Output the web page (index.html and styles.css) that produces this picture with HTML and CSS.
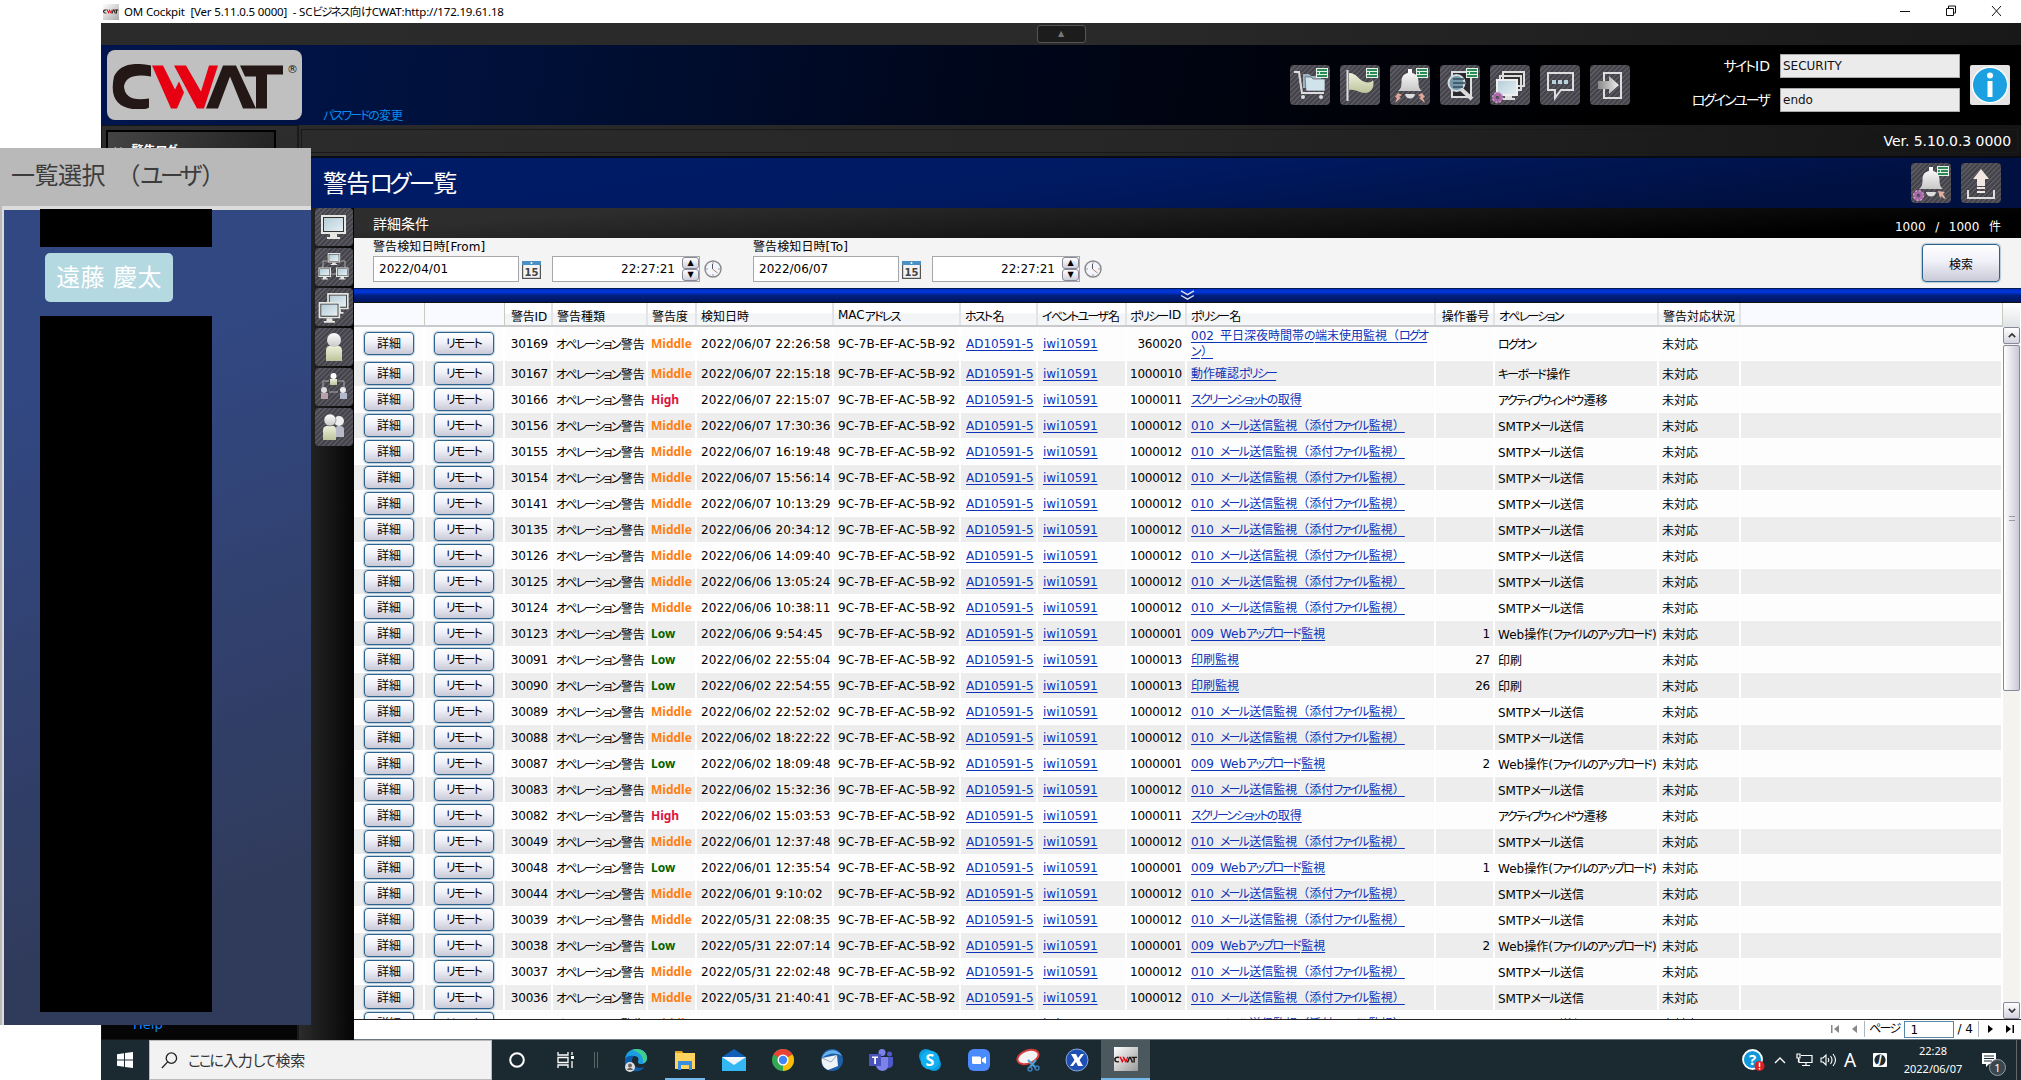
FILE: index.html
```html
<!DOCTYPE html>
<html lang="ja">
<head>
    <meta charset="UTF-8">
    <title>OM Cockpit</title>
    <link rel="stylesheet" href="styles.css">
</head>
<body>
    <svg class="defs" width="0" height="0">
        <defs>
            <linearGradient id="gMetal" x1="0" y1="0" x2="0" y2="1"><stop offset="0" stop-color="#fff"/><stop offset="1" stop-color="#c8c8c8"/></linearGradient>
            <linearGradient id="gScreen" x1="0" y1="0" x2="1" y2="1"><stop offset="0" stop-color="#b4ccd8"/><stop offset="1" stop-color="#e6f0f4"/></linearGradient>
            <linearGradient id="gGreen" x1="0" y1="0" x2="0" y2="1"><stop offset="0" stop-color="#eef0dc"/><stop offset="1" stop-color="#bcc49a"/></linearGradient>
            <linearGradient id="gArrow" x1="0" y1="0" x2="1" y2="0"><stop offset="0" stop-color="#888"/><stop offset="1" stop-color="#eee"/></linearGradient>
            <g id="sheet">
                <path fill="#e8f0e8" d="M26 3h12v10H26z"/>
                <path fill="#2a8a58" d="M27 4h10v2H27zM27 7h2v2h-2zM30 7h7v2h-7zM27 10h10v2H27z"/>
            </g>
            <g id="gear">
                <circle cx="7.500" cy="32.500" r="3.500" fill="none" stroke="#a868a8" stroke-width="3.500"/>
                <circle cx="7.500" cy="32.500" r="5" fill="none" stroke="#c89cc8" stroke-width="1.500" stroke-dasharray="2 1.900"/>
            </g>
            <g id="bell">
                <path fill="url(#gMetal)" d="M18 4h4v4c5 1 6.500 4 6.500 9 0 5 1 7 3.500 9H8c2.500-2 3.500-4 3.500-9 0-5 1.500-8 6.500-9z"/>
                <path fill="#ddd" d="M15 29h10c-1 6-9 6-10 0z"/>
            </g>
            <g id="monitor">
                <path fill="#e6e6e2" d="M6 7h25v19H6z"/>
                <path fill="#333" d="M8 9h21v15H8z"/>
                <path fill="url(#gScreen)" d="M9 10h19v13H9z"/>
                <path fill="#e6e6e2" d="M15 26h7v3h3v2H12v-2h3z"/>
            </g>
            <symbol id="i-cart" viewBox="0 0 40 40">
                <path fill="none" stroke="#ddd" stroke-width="2" d="M4 7h5l3 21h22"/>
                <path fill="none" stroke="#ccc" d="M9 11l2 13"/>
                <circle cx="13" cy="32" r="2" fill="#ddd"/><circle cx="31" cy="32" r="2" fill="#ddd"/>
                <path fill="#9db4c0" d="M13 9h6l2 2h10v12H13z"/>
                <path fill="#d0e2ea" stroke="#445" stroke-width=".600" d="M15 12h6l2 2h12v12H16z"/>
                <use href="#sheet"/>
            </symbol>
            <symbol id="i-flag" viewBox="0 0 40 40">
                <path stroke="#ddd" stroke-width="2" d="M7.500 5v31"/>
                <path fill="url(#gGreen)" d="M9 8c8 0 9 7 16 9 4 1 7 0 8-2 2 7-2 13-8 13-6 0-9-4-16-3z"/>
                <use href="#sheet"/>
            </symbol>
            <symbol id="i-bell" viewBox="0 0 40 40">
                <use href="#bell"/>
                <path fill="#e0a898" d="M8 28l4 2-3 2 2 1-6 5 2-5-2-1zM32 28l-4 2 3 2-2 1 6 5-2-5 2-1z"/>
                <use href="#sheet"/>
            </symbol>
            <symbol id="i-find" viewBox="0 0 40 40">
                <path fill="#2b2930" stroke="#ddd" stroke-width="2" d="M12 7h19v25H12z"/>
                <path stroke="#ddd" stroke-width="4" d="M21 24l11 10"/>
                <circle cx="16.500" cy="18" r="8" fill="#7898a8" stroke="#d4dadc" stroke-width="2"/>
                <path stroke="#31495a" stroke-width="1.500" d="M13 14h11M13 18h12M13 22h10"/>
                <use href="#sheet"/>
            </symbol>
            <symbol id="i-screens" viewBox="0 0 40 40">
                <path fill="#333" stroke="#ddd" stroke-width="2" d="M13 7h21v14H13zM10 11h21v14H10z"/>
                <path fill="url(#gScreen)" stroke="#eee" stroke-width="2" d="M7 15h20v15H7z"/>
                <path fill="#ddd" d="M15 31h7v2h3v2H13v-2h2z"/>
                <use href="#gear"/>
            </symbol>
            <symbol id="i-chat" viewBox="0 0 40 40">
                <path fill="none" stroke="#ddd" stroke-width="2" d="M8 8h25v17H21l-6 8v-8H8z"/>
                <path fill="#b8d0dc" d="M12 15h4v4h-4zM18 15h4v4h-4zM24 15h4v4h-4z"/>
            </symbol>
            <symbol id="i-exit" viewBox="0 0 40 40">
                <path fill="none" stroke="#ddd" stroke-width="2" d="M14 8h17v25H14z"/>
                <path fill="url(#gArrow)" d="M8 16h11v-5l10 9-10 9v-5H8z"/>
            </symbol>
            <symbol id="i-bellgear" viewBox="0 0 40 40">
                <use href="#bell"/>
                <path fill="#e0b0a0" d="M27 28l7 1-2 2 3 5-3-1-1-2-2 2z"/>
                <use href="#sheet"/><use href="#gear"/>
            </symbol>
            <symbol id="i-upload" viewBox="0 0 40 40">
                <path fill="#f2e6e0" d="M20 6l8 10h-4v7h-8v-7h-4zM16 24h8v2h-8zM16 28h8v2h-8z"/>
                <path fill="none" stroke="#ddd" stroke-width="2" d="M7 27v8h26v-8"/>
            </symbol>
            <symbol id="i-pc" viewBox="0 0 38 38"><use href="#monitor"/></symbol>
            <symbol id="i-pcs" viewBox="0 0 38 38">
                <path fill="none" stroke="#aaa" d="M12 13H8v7M26 13h4v7M16 26h6"/>
                <use href="#monitor" transform="translate(9.700 1.500) scale(.5)"/>
                <use href="#monitor" transform="translate(.5 16) scale(.5)"/>
                <use href="#monitor" transform="translate(18 16) scale(.5)"/>
            </symbol>
            <symbol id="i-pc2" viewBox="0 0 38 38">
                <use href="#monitor" transform="translate(7 -1) scale(.86)"/>
                <use href="#monitor" transform="translate(-1.500 8) scale(.86)"/>
            </symbol>
            <symbol id="i-user" viewBox="0 0 38 38">
                <path fill="url(#gGreen)" d="M11 33V23c0-4 2-5 4-5h8c2 0 4 1 4 5v10z"/>
                <circle cx="19" cy="12" r="7" fill="url(#gMetal)"/>
            </symbol>
            <symbol id="i-org" viewBox="0 0 38 38">
                <path fill="none" stroke="#aaa" d="M14 13H8v6M23 13h6v6M14 24h9"/>
                <path fill="url(#gGreen)" d="M15 11h7v6h-7z"/><path fill="#b8a0a8" d="M6 25h7v6H6z"/><path fill="#b4b8cc" d="M25 25h7v6h-7z"/>
                <circle cx="18.500" cy="8" r="3" fill="#fff"/><circle cx="9" cy="22" r="3" fill="#ddd"/><circle cx="28" cy="22" r="3" fill="#eee"/>
            </symbol>
            <symbol id="i-users" viewBox="0 0 38 38">
                <path fill="#b8bac8" d="M21 29V20c0-2 2-2 4-2s4 1 4 3v8z"/>
                <circle cx="24" cy="13" r="5" fill="#eee"/>
                <path fill="url(#gGreen)" d="M8 32V22c0-3 2-4 4-4h6c2 0 3 1 3 4v10z"/>
                <circle cx="15" cy="12" r="6" fill="url(#gMetal)" stroke="#555" stroke-width=".500"/>
            </symbol>
            <symbol id="i-cal" viewBox="0 0 19 19">
                <path fill="#f4f4f4" stroke="#555" stroke-width="1.200" d="M.6 1.600h17.800v16.800H.6z"/>
                <path fill="#4a90c4" d="M0 1h19v4H0z"/><circle cx="9.500" cy="3" r="1" fill="#fff"/>
                <text x="9.500" y="15.500" text-anchor="middle" class="cal-text">15</text>
            </symbol>
            <symbol id="i-clock" viewBox="0 0 18 18">
                <circle cx="9" cy="9" r="8" fill="#f2f6fa" stroke="#888" stroke-width="1.400"/>
                <path fill="none" stroke="#99a" d="M9 2v2M9 14v2M2 9h2M14 9h2"/>
                <path fill="none" stroke="#556" d="M8.500 4v5"/><path stroke="#c08060" d="M8.500 9l5 4"/>
            </symbol>
            <symbol id="i-cwat" viewBox="0 0 178 44">
                <path fill="#231815" d="M39 1Q10-5 2 12-5 44 26 45q8 0 11-2v-9Q13 38 12 22 14 8 39 12zM94 44L111 1h13l20 43h-13L118 12l-12 32zM128 1h43v9h-16v34h-11V12h-11z"/>
                <path fill="#e60012" d="M40 1h11l12 24 4-8 5 11-7 16h-6zM62 1h12l15 26L97 1h9L92 44h-7z"/>
            </symbol>
        </defs>
    </svg>

    <div class="window">
        <div class="titlebar">
            <span class="app-icon"><svg><use href="#i-cwat"/></svg></span>
            <span class="app-title">OM Cockpit&nbsp; [Ver 5.11.0.5 0000]&nbsp; - SC<span class="kana">ビジネス</span>向<span class="kana">け</span>CWAT:http://172.19.61.18</span>
            <svg class="win-controls" viewBox="0 0 110 22">
                <path fill="none" stroke="#111" d="M9 10.500h10M55.500 7.500h7v7h-7zM57.500 7v-2h7v7h-2M101 5l9 10M110 5l-9 10"/>
            </svg>
        </div>
        <div class="tabstrip"><span class="tab-up">▲</span></div>
        <div class="header">
            <div class="logo"><svg><use href="#i-cwat"/></svg><span class="reg">®</span></div>
            <a class="password"><span class="kana">パスワードの</span>変更</a>
            <div class="header-icons">
                <svg><use href="#i-cart"/></svg>
                <svg><use href="#i-flag"/></svg>
                <svg><use href="#i-bell"/></svg>
                <svg><use href="#i-find"/></svg>
                <svg><use href="#i-screens"/></svg>
                <svg><use href="#i-chat"/></svg>
                <svg><use href="#i-exit"/></svg>
            </div>
            <div class="login">
                <label><span class="kana">サイト</span>ID</label><div class="login-field">SECURITY</div>
                <label><span class="kana">ログインユーザ</span></label><div class="login-field">endo</div>
            </div>
            <svg class="info" viewBox="0 0 40 40">
                <rect width="40" height="40" rx="2" fill="#e4e4e4"/><circle cx="20" cy="20" r="18.500" fill="#fff"/>
                <circle cx="20" cy="20" r="17" fill="#1ba1e2"/><circle cx="20" cy="10.500" r="3" fill="#fff"/><path fill="#fff" d="M17.500 16h5v16h-5z"/>
            </svg>
        </div>

        <div class="main">
            <div class="sidebar">
                <div class="menu-head">✕&nbsp; 警告<span class="kana">ログ</span></div>
                <a class="help">Help</a>
            </div>
            <div class="content">
                <div class="version"><div class="version-box">Ver. 5.10.0.3 0000</div></div>
                <div class="page-head">
                    <h1>警告<span class="kana">ログ</span>一覧</h1>
                    <svg><use href="#i-bellgear"/></svg>
                    <svg><use href="#i-upload"/></svg>
                </div>
                <div class="work">
                    <div class="tools">
                        <svg><use href="#i-pc"/></svg>
                        <svg><use href="#i-pcs"/></svg>
                        <svg><use href="#i-pc2"/></svg>
                        <svg><use href="#i-user"/></svg>
                        <svg><use href="#i-org"/></svg>
                        <svg><use href="#i-users"/></svg>
                    </div>
                    <div class="panel">
                        <div class="cond-head"><span>詳細条件</span><span class="count">1000&nbsp; /&nbsp; 1000&nbsp; 件</span></div>
                        <div class="filters">
                            <div class="filter">
                                <div class="filter-label">警告検知日時[From]</div>
                                <div class="filter-row">
                                    <div class="date">2022/04/01</div><svg class="cal"><use href="#i-cal"/></svg>
                                    <div class="time">22:27:21<span class="spin"><i>▲</i><i>▼</i></span></div><svg class="clock"><use href="#i-clock"/></svg>
                                </div>
                            </div>
                            <div class="filter">
                                <div class="filter-label">警告検知日時[To]</div>
                                <div class="filter-row">
                                    <div class="date">2022/06/07</div><svg class="cal"><use href="#i-cal"/></svg>
                                    <div class="time">22:27:21<span class="spin"><i>▲</i><i>▼</i></span></div><svg class="clock"><use href="#i-clock"/></svg>
                                </div>
                            </div>
                            <button class="search-btn">検索</button>
                        </div>
                        <div class="splitter"><svg viewBox="0 0 16 12"><path fill="none" stroke="#dde" stroke-width="1.500" d="M1 1l7 4 7-4M1 6l7 4 7-4"/></svg></div>
                        <div class="grid-area">
                            <div class="grid">
                                <div class="row head">
                                    <div></div><div></div><div class="num">警告ID</div><div>警告種類</div><div>警告度</div><div>検知日時</div>
                                    <div>MAC<span class="kana">アドレス</span></div><div><span class="kana">ホスト</span>名</div><div><span class="kana">イベントユーザ</span>名</div>
                                    <div class="num"><span class="kana">ポリシー</span>ID</div><div><span class="kana">ポリシー</span>名</div><div class="num">操作番号</div>
                                    <div><span class="kana">オペレーション</span></div><div>警告対応状況</div><div></div>
                                </div>
                                <div id="rows"></div>
                            </div>
                            <div class="scroll">
                                <div class="scroll-corner"></div>
                                <div class="scroll-btn"><svg viewBox="0 0 10 6"><path fill="none" stroke="#333" stroke-width="2" d="M1 5l4-4 4 4"/></svg></div>
                                <div class="thumb"><span class="grip"></span></div>
                                <div class="scroll-btn last"><svg viewBox="0 0 10 6"><path fill="none" stroke="#333" stroke-width="2" d="M1 1l4 4 4-4"/></svg></div>
                            </div>
                        </div>
                        <div class="pager">
                            <svg class="nav off" viewBox="0 0 8 8"><path d="M0 0h1.500v8H0zM8 0v8L3 4z"/></svg>
                            <svg class="nav off" viewBox="0 0 8 8"><path d="M7 0v8L2 4z"/></svg>
                            <span class="page-label"><span class="kana">ページ</span></span>
                            <span class="page-input">1</span>
                            <span class="page-total">/ 4</span>
                            <svg class="nav" viewBox="0 0 8 8"><path d="M1 0v8l5-4z"/></svg>
                            <svg class="nav" viewBox="0 0 8 8"><path d="M0 0v8l5-4zM6.500 0H8v8H6.500z"/></svg>
                        </div>
                    </div>
                </div>
            </div>
        </div>

        <div class="taskbar">
            <div class="start"><svg viewBox="0 0 16 16"><path fill="#fff" d="M0 2.200l7-1v6.300H0zM8 1l8-1v7.500H8zM0 8.500h7v6.300l-7-1zM8 8.500h8V16l-8-1z"/></svg></div>
            <div class="task-search">
                <svg viewBox="0 0 18 18"><circle cx="11" cy="6.500" r="5.500" fill="none" stroke="#222" stroke-width="1.400"/><path stroke="#222" stroke-width="1.400" d="M7 10.500L1 17"/></svg>
                <span><span class="kana">ここに</span>入力<span class="kana">して</span>検索</span>
            </div>
            <div class="task"><svg viewBox="0 0 24 24"><circle cx="12" cy="12" r="6.800" fill="none" stroke="#fff" stroke-width="2"/></svg></div>
            <div class="task"><svg viewBox="0 0 24 24"><path fill="none" stroke="#fff" stroke-width="1.300" d="M4 4v3h10V4M4 20v-3h10v3M4 9.500h10v5H4zM18 4v3M18 13v7"/><path fill="#fff" d="M17 8h3v3h-3z"/></svg></div>
            <div class="task-sep"></div>
            <div class="task"><svg viewBox="0 0 24 24"><path fill="#1b9de2" d="M1 11C2 3 8 1 13 1c6 0 10 4 10 9 0 4-3 6-6 6s-3-2-3-3c1-1 1-5-4-5-4 0-7 1-9 3z"/><path fill="#3ecf8e" d="M8 2c8-3 15 2 15 8 0 3-2 5-4 5 1-7-4-11-11-13z"/><path fill="#0b5cad" d="M1 11c2-3 6-4 9-3-4 4-2 11 5 12 3 0 5-1 6-2-3 5-8 6-12 5C3 21 0 17 1 11z"/><circle cx="6" cy="19" r="5" fill="#ddd"/><circle cx="6" cy="17.500" r="2" fill="#666"/><path fill="#666" d="M3 22c1-3 5-3 6 0z"/></svg></div>
            <div class="task open"><svg viewBox="0 0 24 24"><path fill="#e6a31a" d="M2 3h7l2 3H2z"/><path fill="#ffd45e" d="M2 5h20v16H2z"/><path fill="#3a8ede" d="M5 13h14v9h-3v-5H8v5H5z"/></svg></div>
            <div class="task"><svg viewBox="0 0 24 24"><path fill="#0f5fb8" d="M0 9l12-8 12 8z"/><path fill="#35b7f3" d="M0 9h24v14H0z"/><path fill="#f2f6fa" d="M0 9h24l-12 8z"/></svg></div>
            <div class="task"><svg viewBox="0 0 24 24"><circle cx="12" cy="12" r="11" fill="#34a853"/><path fill="#ea4335" d="M2.500 6.500a11 11 0 0119 0L12 12z"/><path fill="#fbbc05" d="M21.500 6.500A11 11 0 0112 23V12z"/><circle cx="12" cy="12" r="5.500" fill="#fff"/><circle cx="12" cy="12" r="4.200" fill="#4285f4"/></svg></div>
            <div class="task"><svg viewBox="0 0 24 24"><circle cx="12" cy="12" r="11" fill="#1f5faa"/><path fill="#69b4ee" d="M2 10C4 1 17-1 22 8c-6-4-14-3-20 2z"/><path fill="#eef3f8" d="M2 10l15-3 1 11-10 4c-5-2-7-7-6-12z"/><path fill="none" stroke="#9ab" d="M2 10l9 4 6-7"/></svg></div>
            <div class="task"><svg viewBox="0 0 24 24"><circle cx="13" cy="4.500" r="3.500" fill="#7b83eb"/><circle cx="20.500" cy="6" r="2.500" fill="#5059c9"/><path fill="#5059c9" d="M16 9h8v7c0 4-5 5-8 3z"/><path fill="#7b83eb" d="M7 9h12v9c0 6-10 7-12 0z"/><path fill="#4b53bc" d="M0 6h12v12H0z"/><path fill="#fff" d="M3 8.500h6V10H7v6H5.200v-6H3z"/></svg></div>
            <div class="task"><svg viewBox="0 0 24 24"><circle cx="8" cy="8" r="7" fill="#0a9be0"/><circle cx="16" cy="16" r="7" fill="#0a9be0"/><circle cx="12" cy="12" r="9.500" fill="#12b0f2"/><text x="12" y="17.500" text-anchor="middle" class="skype">S</text></svg></div>
            <div class="task"><svg viewBox="0 0 24 24"><rect x="1" y="1" width="22" height="22" rx="6" fill="#4a8cff"/><path fill="#fff" d="M5 8.500h7.500q1.500 0 1.500 1.500v6H6.500Q5 16 5 14.500zM15 11l4-2.500v7.500l-4-2.500z"/></svg></div>
            <div class="task"><svg viewBox="0 0 24 24"><ellipse cx="12" cy="9" rx="11" ry="6.500" transform="rotate(-20 12 9)" fill="#f4f4f4" stroke="#d63a3a" stroke-width="2"/><path fill="none" stroke="#4aa3d8" stroke-width="2" d="M12 12l8 8M20 12l-7 8"/><circle cx="14" cy="21" r="2" fill="none" stroke="#3a7fb8" stroke-width="1.500"/><circle cx="21" cy="20" r="2" fill="none" stroke="#3a7fb8" stroke-width="1.500"/></svg></div>
            <div class="task"><svg viewBox="0 0 24 24"><circle cx="12" cy="12" r="11" fill="#1d4fb4" stroke="#89a8dc"/><path fill="#fff" d="M6 6h5l2 4 3-4h3l-4.500 6 3.500 6h-5l-2-4-3 4H5l4.500-6z"/></svg></div>
            <div class="task active"><div class="cwat-tile"><svg><use href="#i-cwat"/></svg></div></div>
            <div class="tray">
                <svg class="tray-help" viewBox="0 0 23 23"><circle cx="10.500" cy="10.500" r="9.500" fill="#1098d8" stroke="#fff" stroke-width="1.800"/><text x="10.500" y="16" text-anchor="middle" class="q">?</text><circle cx="17.500" cy="17" r="5" fill="#e02020"/><path stroke="#fff" stroke-width="1.500" d="M17.500 13.500v4.500M17.500 19v1.500"/></svg>
                <svg class="tray-up" viewBox="0 0 12 8"><path fill="none" stroke="#fff" stroke-width="1.300" d="M1 7l5-5 5 5"/></svg>
                <svg class="tray-net" viewBox="0 0 17 14"><path fill="none" stroke="#fff" stroke-width="1.200" d="M5 2.500h11v7H3V6M10 9.500v3M6 12.500h8M1 1h3v4H1zM2.500 5v4"/></svg>
                <svg class="tray-vol" viewBox="0 0 17 14"><path fill="none" stroke="#fff" stroke-width="1.100" d="M1 5h2l3-3v10L3 9H1zM8 5q1.500 2 0 4M10.500 3q3 4 0 8M13 1q5 6 0 12"/></svg>
                <span class="ime">A</span>
                <span class="tray-j">J</span>
                <div class="datetime">22:28<br>2022/06/07</div>
                <div class="notice"><svg viewBox="0 0 16 16"><path fill="#fff" d="M0 1h14v11H7l-3 3v-3H0z"/><path stroke="#1b2a30" d="M2 4h10M2 6.500h10M2 9h8"/></svg><span class="badge">1</span></div>
            </div>
        </div>
    </div>

    <div class="overlay">
        <div class="overlay-title">一覧選択　（<span class="kana">ユーザ</span>）</div>
        <div class="overlay-body">
            <div class="mask mask-top"></div>
            <div class="selected-user">遠藤 慶太</div>
            <div class="mask mask-list"></div>
        </div>
    </div>

    <script src="rows.js"></script>
</body>
</html>
```
FILE: styles.css
```css
* {
    box-sizing: border-box;
}

body {
    margin: 0;
    width: 2021px;
    height: 1080px;
    overflow: hidden;
    position: relative;
    background: #fff;
    font-family: "DejaVu Sans", "Noto Sans CJK JP", sans-serif;
    font-size: 12px;
    color: #000;
}

svg {
    display: block;
    flex: none;
}

.defs {
    position: absolute;
}

.kana {
    margin-right: 0.1em;
    font-feature-settings: "palt";
    letter-spacing: -0.15em;
}

.window {
    margin-left: 101px;
    height: 1080px;
    display: flex;
    flex-direction: column;
}

/* title bar */
.titlebar {
    height: 23px;
    flex: none;
    display: flex;
    align-items: center;
    padding-left: 2px;
    background: #fff;
}

.app-icon {
    width: 16px;
    height: 16px;
    display: flex;
    align-items: center;
    background: linear-gradient(135deg, #fff, #aaa);
}

.app-icon svg {
    width: 16px;
    height: 5px;
}

.app-title {
    margin-left: 5px;
    padding-bottom: 1px;
    font-family: "Noto Sans", "Noto Sans CJK JP", sans-serif;
    font-size: 11.5px;
    letter-spacing: -0.17px;
    white-space: nowrap;
}

.win-controls {
    width: 110px;
    height: 22px;
    margin-left: auto;
    margin-right: 20px;
}

.tabstrip {
    height: 22px;
    flex: none;
    display: flex;
    justify-content: center;
    padding-top: 2px;
    background: linear-gradient(90deg, #2b2b2b, #2a2a2a 50%, #181818);
}

.tab-up {
    width: 49px;
    height: 18px;
    border: 1px solid #555;
    border-radius: 3px;
    background: #1c1c1c;
    color: #777;
    font-size: 8px;
    line-height: 16px;
    text-align: center;
}

/* header */
.header {
    height: 80px;
    flex: none;
    display: flex;
    align-items: center;
    padding-left: 6px;
    padding-right: 11px;
    background: linear-gradient(100deg, #00154f 0%, #001038 22%, #00071c 45%, #000209 65%, #000 80%);
}

.logo {
    width: 195px;
    height: 70px;
    display: flex;
    align-items: flex-start;
    padding: 14px 5px;
    border-radius: 8px;
    background: #c0c0c0;
}

.logo svg {
    width: 178px;
    height: 45px;
}

.reg {
    width: 10px;
    margin-left: -3px;
    color: #231815;
    font-size: 11px;
    line-height: 12px;
}

.password {
    margin: 66px auto 0 21px;
    height: 24px;
    color: #0a8cf0;
}

.header-icons {
    display: flex;
    gap: 10px;
}

.header-icons svg,
.page-head svg {
    width: 40px;
    height: 40px;
}

.header-icons svg,
.page-head svg,
.tools svg {
    border-radius: 4px;
    background: repeating-linear-gradient(135deg, #5a5860 0, #5a5860 1.5px, #46444b 1.5px, #46444b 3.5px);
}

.login {
    width: 276px;
    margin: 0 10px 4px 54px;
    display: grid;
    grid-template-columns: 1fr 180px;
    gap: 10px;
    align-items: center;
    color: #fff;
    text-align: right;
    font-size: 14px;
}

.login label {
    padding-bottom: 3px;
}

.login-field {
    height: 24px;
    padding-left: 2px;
    border: 1px solid #aaa;
    background: #ebebeb;
    color: #111;
    font-size: 12px;
    line-height: 23px;
    text-align: left;
}

.info {
    width: 40px;
    height: 40px;
}

/* main */
.main {
    flex: 1;
    min-height: 0;
    display: flex;
    background: linear-gradient(90deg, #2b2b2b, #111);
}

.sidebar {
    width: 198px;
    flex: none;
    display: flex;
    flex-direction: column;
    justify-content: space-between;
    border: 1px solid #151515;
    border-right: 2px solid #1a1a1a;
    background: linear-gradient(#2d2d2d, #050505);
}

.menu-head {
    width: 170px;
    height: 34px;
    margin: 4px 0 0 4px;
    padding: 11px 0 0 5px;
    border: 2px solid #000;
    background: linear-gradient(110deg, #444, #222);
    color: #fff;
    font-weight: bold;
    line-height: 16px;
}

.help {
    height: 22px;
    margin-left: 31px;
    color: #0a84ff;
    font-size: 13px;
}

.content {
    flex: 1;
    min-width: 0;
    display: flex;
    flex-direction: column;
}

.version {
    height: 33px;
    flex: none;
    padding: 4px 3px 5px 2px;
    background: linear-gradient(90deg, #2b2b2b, #262626 50%, #141414);
    border-bottom: 2px solid #080a14;
}

.version-box {
    height: 24px;
    border: 1px solid #191919;
    padding-right: 6px;
    color: #fff;
    font-size: 14px;
    letter-spacing: -0.05px;
    line-height: 23px;
    text-align: right;
}

.page-head {
    height: 50px;
    flex: none;
    display: flex;
    align-items: center;
    gap: 10px;
    padding: 0 20px 0 24px;
    background: linear-gradient(172deg, #001c68 0%, #001a62 45%, #001040 85%);
}

.page-head h1 {
    margin: -3px auto 0 0;
    color: #fff;
    font-size: 24px;
    font-weight: 400;
    letter-spacing: -0.7px;
}

.work {
    flex: 1;
    min-height: 0;
    display: flex;
}

.tools {
    width: 55px;
    flex: none;
    display: flex;
    flex-direction: column;
    align-items: flex-end;
    gap: 2px;
    padding-right: 1px;
    background: linear-gradient(90deg, #2b2b2b, #050505);
}

.tools svg {
    width: 38px;
    height: 38px;
}

.panel {
    flex: 1;
    min-width: 0;
    display: flex;
    flex-direction: column;
    background: #fff;
}

.cond-head {
    height: 30px;
    flex: none;
    display: flex;
    align-items: center;
    justify-content: space-between;
    padding: 0 20px 0 19px;
    background: linear-gradient(176deg, #2d2d2d 15%, #000 85%);
    color: #fff;
    font-size: 14px;
}

.count {
    padding-top: 5px;
    font-size: 12px;
    word-spacing: 1px;
}

.filters {
    height: 50px;
    flex: none;
    display: flex;
    padding: 0 21px 0 19px;
    background: #f4f4f4;
}

.filter {
    width: 380px;
}

.filter-label {
    height: 18px;
    padding-top: 1px;
    letter-spacing: 0.1px;
    line-height: 17px;
}

.filter-row {
    display: flex;
    align-items: center;
}

.date,
.time {
    height: 26px;
    border: 1px solid #a5a7ab;
    background: #fff;
    line-height: 25px;
}

.date {
    width: 146px;
    padding-left: 5px;
}

.cal {
    width: 19px;
    height: 19px;
    margin: 0 11px 0 3px;
}

.cal-text {
    font: bold 10px "DejaVu Sans", sans-serif;
    fill: #444;
}

.time {
    width: 148px;
    display: flex;
    justify-content: flex-end;
}

.spin {
    width: 17px;
    display: flex;
    flex-direction: column;
    margin-left: 7px;
}

.spin i {
    height: 12px;
    border: 1px solid #889;
    border-radius: 3px;
    background: linear-gradient(#fff, #cfd0dc);
    font-size: 8px;
    font-style: normal;
    line-height: 10px;
    text-align: center;
}

.clock {
    width: 18px;
    height: 18px;
    margin-left: 4px;
}

.search-btn {
    width: 78px;
    height: 38px;
    margin: 6px 0 0 auto;
    font-size: 12px;
}

.search-btn,
.btn {
    padding: 0;
    border: 1px solid #2c628b;
    border-radius: 4px;
    background: linear-gradient(#fff, #f0f0f8 45%, #cacad8);
    color: #000;
    font-family: inherit;
    box-shadow: 0 0 1px 1px rgba(90, 140, 180, 0.4);
}

.splitter {
    height: 15px;
    flex: none;
    display: flex;
    align-items: center;
    justify-content: center;
    border-top: 1px solid #001a50;
    border-bottom: 1px solid #111;
    background: linear-gradient(#0030c8, #0036d8 25%, #001f80 50%, #001660);
}

.splitter svg {
    width: 15px;
    height: 11px;
}

/* grid */
.grid-area {
    flex: 1;
    min-height: 0;
    display: flex;
    border-bottom: 1px solid #222;
    overflow: hidden;
}

.grid {
    flex: 1;
    min-width: 0;
}

.row {
    display: grid;
    grid-template-columns: 71px 80px 48px 95px 49px 137px 127px 77px 89px 60px 249px 59px 164px 82px 1fr;
    height: 26px;
    background: #fdfdfd;
    border-bottom: 1px solid #fff;
}

.row.tall {
    height: 34px;
}

.row.alt {
    background: #ededed;
}

.row > div {
    display: flex;
    align-items: center;
    padding: 0 3px;
    border-right: 2px solid #fff;
    white-space: nowrap;
}

.row > .num {
    justify-content: flex-end;
    letter-spacing: -0.2px;
}

.row > .code {
    padding-left: 4px;
    letter-spacing: 0.14px;
}

.row > .link {
    padding: 1px 0 0 5px;
}

.row > .policy {
    padding-left: 4px;
}

.row.head {
    height: 24px;
    border-bottom: 2px solid #c8cacc;
    background: linear-gradient(#fff 45%, #f2f3f5 50%, #f6f7f8);
}

.row.head > div {
    border-right: 2px solid #e2e4e6;
    padding: 2px 4px 0;
}

.row.head > div.num {
    padding-right: 4px;
}

.row.head > div:nth-child(-n+2),
.row.head > div:last-child {
    border-right: 1px solid #c9cbbc;
    background: #f9faff;
}

.row > .cell-btn:first-child {
    padding-left: 10px;
}

.row > .cell-btn {
    padding-left: 9px;
}

.btn {
    width: 50px;
    height: 23px;
    font-size: 12px;
    line-height: 20px;
}

.btn.wide {
    width: 60px;
}

.level {
    font-family: "Noto Sans", sans-serif;
    font-weight: bold;
}

.Middle {
    color: #ff7f11;
}

.High {
    color: #dc143c;
}

.Low {
    color: #006400;
}

.row a {
    color: #0d34b8;
    text-decoration: underline;
    text-underline-offset: 2px;
    line-height: 15px;
}

.row.tall a {
    white-space: normal;
    line-height: 16px;
}

.scroll {
    width: 17px;
    margin-right: 1px;
    flex: none;
    display: flex;
    flex-direction: column;
    background: #f4f3f0;
}

.scroll-corner {
    height: 24px;
    flex: none;
    background: linear-gradient(#fff, #dfe3e6);
}

.scroll-btn {
    height: 17px;
    flex: none;
    display: flex;
    align-items: center;
    justify-content: center;
    border: 1px solid #889;
    border-radius: 2px;
    background: linear-gradient(#fff, #d4d4e0);
}

.scroll-btn svg {
    width: 8px;
    height: 5px;
}

.scroll-btn.last {
    margin-top: auto;
}

.thumb {
    height: 346px;
    margin-top: 1px;
    display: flex;
    align-items: center;
    justify-content: center;
    border: 1px solid #889;
    border-radius: 2px;
    background: linear-gradient(90deg, #fff, #c8c8d8);
}

.grip {
    width: 6px;
    height: 5px;
    border-top: 1px solid #99a;
    border-bottom: 1px solid #99a;
}

.pager {
    height: 20px;
    flex: none;
    display: flex;
    align-items: center;
    justify-content: flex-end;
    padding: 0 7px 1px 0;
    border-bottom: 1px solid #6a7680;
}

.nav {
    width: 8px;
    height: 8px;
    margin: 0 0 0 11px;
}

.nav.off {
    fill: #888;
}

.page-label {
    margin-left: 6px;
    padding: 0 3px 0 4px;
    border-left: 1px solid #a9b8c4;
    line-height: 16px;
}

.page-input {
    width: 50px;
    height: 17px;
    padding-left: 6px;
    border: 1px solid #5a87a8;
    line-height: 16px;
}

.page-total {
    margin-right: -3px;
    padding: 0 5px 0 4px;
    border-right: 1px solid #a9b8c4;
    line-height: 16px;
}

/* taskbar */
.taskbar {
    height: 40px;
    flex: none;
    display: flex;
    align-items: stretch;
    background: #1b2a30;
}

.start {
    width: 48px;
    display: flex;
    align-items: center;
    justify-content: center;
}

.start svg {
    width: 16px;
    height: 16px;
}

.task-search {
    width: 343px;
    display: flex;
    align-items: center;
    gap: 10px;
    padding-left: 11px;
    border: 1px solid #bbb;
    background: #f2f2f2;
    color: #333;
    font-size: 15px;
    font-family: "Noto Sans CJK JP", sans-serif;
}

.task-search svg {
    width: 17px;
    height: 17px;
}

.task-search > span {
    padding-bottom: 2px;
    letter-spacing: -0.3px;
}

.task {
    width: 49px;
    display: flex;
    align-items: center;
    justify-content: center;
}

.task svg {
    width: 24px;
    height: 24px;
}

.task-sep {
    width: 4px;
    height: 16px;
    margin: 12px 13px 0 4px;
    border-left: 1px solid #566;
    border-right: 1px solid #566;
}

.task.open {
    background: linear-gradient(#76b9ed, #76b9ed) center bottom / 40px 2px no-repeat;
}

.task.active {
    background: #4b585d;
    border-bottom: 2px solid #76b9ed;
}

.cwat-tile {
    width: 24px;
    height: 24px;
    display: flex;
    align-items: center;
    background: linear-gradient(135deg, #fff, #999);
}

.cwat-tile svg {
    width: 24px;
    height: 7px;
}

.skype {
    font: bold 16px "Noto Sans", sans-serif;
    fill: #fff;
}

.q {
    font: bold 15px "Noto Sans", sans-serif;
    fill: #fff;
}

.tray {
    margin-left: auto;
    margin-right: 4px;
    padding-right: 10px;
    display: flex;
    align-items: center;
    border-right: 1px solid #666;
    color: #fff;
}

.tray-help {
    width: 23px;
    height: 23px;
}

.tray-up {
    width: 12px;
    height: 8px;
    margin-left: 9px;
}

.tray-net {
    width: 17px;
    height: 14px;
    margin-left: 10px;
}

.tray-vol {
    width: 17px;
    height: 14px;
    margin-left: 7px;
}

.ime {
    width: 14px;
    margin-left: 7px;
    font: 19px "Noto Sans", sans-serif;
}

.tray-j {
    width: 14px;
    height: 14px;
    margin-left: 15px;
    border-radius: 1px;
    background: radial-gradient(circle, #1b2a30 5px, #fff 6px);
    font: bold italic 10px/13px "Noto Sans", sans-serif;
    text-align: center;
}

.datetime {
    width: 62px;
    margin-left: 15px;
    font: 11px/18px "Noto Sans", sans-serif;
    text-align: center;
}

.notice {
    width: 24px;
    margin-left: 18px;
    position: relative;
}

.notice svg {
    width: 16px;
    height: 16px;
}

.badge {
    position: absolute;
    left: 7px;
    top: 7px;
    width: 17px;
    height: 17px;
    border: 1px solid #99a;
    border-radius: 50%;
    background: #3a474d;
    font: 11px/15px "Noto Sans", sans-serif;
    text-align: center;
}

/* user list window lying over the main one */
.overlay {
    position: absolute;
    left: 0;
    top: 148px;
    width: 311px;
    height: 877px;
    display: flex;
    flex-direction: column;
    background: #b9b9b9;
}

.overlay-title {
    height: 58px;
    padding-left: 11px;
    color: #3c3c3c;
    font-size: 24px;
    font-weight: 400;
    letter-spacing: -0.5px;
    line-height: 57px;
    white-space: nowrap;
}

.overlay-body {
    flex: 1;
    margin-left: 2px;
    padding: 0 0 13px 36px;
    display: flex;
    flex-direction: column;
    align-items: flex-start;
    border-top: 4px solid #dcdcdc;
    border-left: 2px solid #dcdcdc;
    background: linear-gradient(160deg, #324883 20%, #303a5a 85%);
}

.mask {
    width: 172px;
    background: #000;
}

.mask-top {
    height: 38px;
    margin-top: -1px;
}

.selected-user {
    width: 128px;
    height: 49px;
    margin: 6px 0 14px 5px;
    border-radius: 5px;
    background: #b4d9e1;
    color: #fff;
    font-size: 24px;
    letter-spacing: 0.4px;
    line-height: 50px;
    text-align: center;
}

.mask-list {
    flex: 1;
}
```
FILE: rows.js
```js
const MAIL = ['1000012', '010_メール送信監視（添付ファイル監視）', '', 'SMTPメール送信'];
const SHOT = ['1000011', 'スクリーンショットの取得', '', 'アクティブウィンドウ遷移'];
const upload = n => ['1000001', '009_Webアップロード監視', n, 'Web操作(ファイルのアップロード)'];
const print = n => ['1000013', '印刷監視', n, '印刷'];

const data = [
    ['30169', 'Middle', '2022/06/07 22:26:58', ['360020', '002_平日深夜時間帯の端末使用監視（ログオン）', '', 'ログオン']],
    ['30167', 'Middle', '2022/06/07 22:15:18', ['1000010', '動作確認ポリシー', '', 'キーボード操作']],
    ['30166', 'High', '2022/06/07 22:15:07', SHOT],
    ['30156', 'Middle', '2022/06/07 17:30:36', MAIL],
    ['30155', 'Middle', '2022/06/07 16:19:48', MAIL],
    ['30154', 'Middle', '2022/06/07 15:56:14', MAIL],
    ['30141', 'Middle', '2022/06/07 10:13:29', MAIL],
    ['30135', 'Middle', '2022/06/06 20:34:12', MAIL],
    ['30126', 'Middle', '2022/06/06 14:09:40', MAIL],
    ['30125', 'Middle', '2022/06/06 13:05:24', MAIL],
    ['30124', 'Middle', '2022/06/06 10:38:11', MAIL],
    ['30123', 'Low', '2022/06/06 9:54:45', upload('1')],
    ['30091', 'Low', '2022/06/02 22:55:04', print('27')],
    ['30090', 'Low', '2022/06/02 22:54:55', print('26')],
    ['30089', 'Middle', '2022/06/02 22:52:02', MAIL],
    ['30088', 'Middle', '2022/06/02 18:22:22', MAIL],
    ['30087', 'Low', '2022/06/02 18:09:48', upload('2')],
    ['30083', 'Middle', '2022/06/02 15:32:36', MAIL],
    ['30082', 'High', '2022/06/02 15:03:53', SHOT],
    ['30049', 'Middle', '2022/06/01 12:37:48', MAIL],
    ['30048', 'Low', '2022/06/01 12:35:54', upload('1')],
    ['30044', 'Middle', '2022/06/01 9:10:02', MAIL],
    ['30039', 'Middle', '2022/05/31 22:08:35', MAIL],
    ['30038', 'Low', '2022/05/31 22:07:14', upload('2')],
    ['30037', 'Middle', '2022/05/31 22:02:48', MAIL],
    ['30036', 'Middle', '2022/05/31 21:40:41', MAIL],
    ['30035', 'Middle', '2022/05/31 21:38:20', MAIL]
];

// kana are set narrower than kanji
function kana(text) {
    return text.replace(/[\u3041-\u30ff]+/g, '<span class="kana">$&</span>');
}

document.getElementById('rows').innerHTML = data.map(([id, level, date, [pid, policy, no, op]], i) => `
    <div class="row ${i === 0 ? 'tall' : ''} ${i % 2 ? 'alt' : ''}">
        <div class="cell-btn"><button class="btn">詳細</button></div>
        <div class="cell-btn"><button class="btn wide">${kana('リモート')}</button></div>
        <div class="num">${id}</div>
        <div><span>${kana('オペレーション')}警告</span></div>
        <div class="level ${level}">${level}</div>
        <div class="code">${date}</div>
        <div class="code">9C-7B-EF-AC-5B-92</div>
        <div class="link"><a>AD10591-5</a></div>
        <div class="link"><a>iwi10591</a></div>
        <div class="num">${pid}</div>
        <div class="link policy"><a>${kana(policy)}</a></div>
        <div class="num">${no}</div>
        <div><span>${kana(op)}</span></div>
        <div>未対応</div>
        <div></div>
    </div>`).join('');
```
